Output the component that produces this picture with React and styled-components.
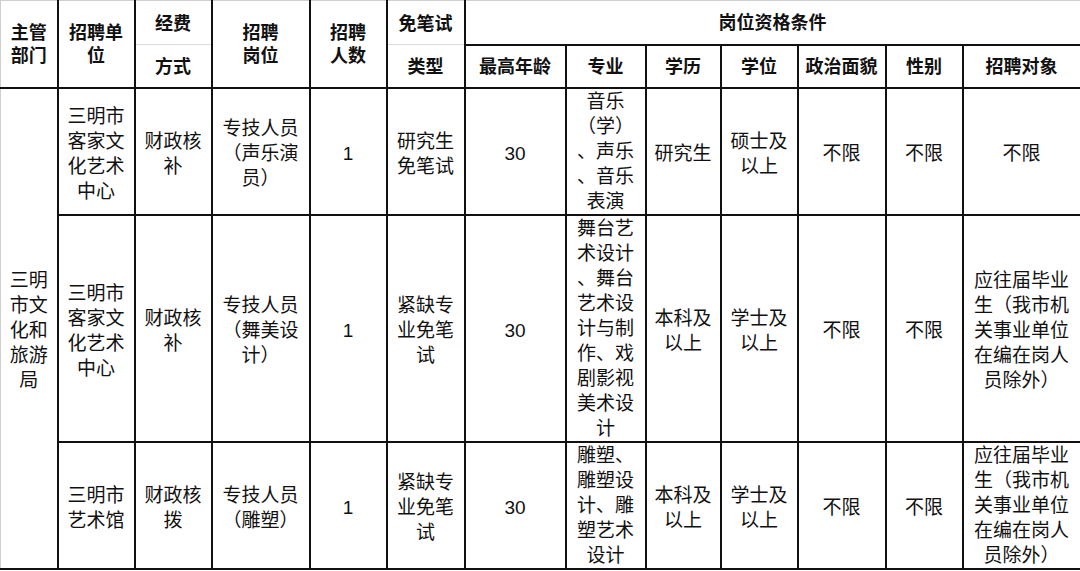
import React from "react";
import styled, { createGlobalStyle } from "styled-components";

const GlobalStyle = createGlobalStyle`
	html, body {
		margin: 0;
		padding: 0;
		background: #ffffff;
	}
	body {
		font-family: "Liberation Sans", "Noto Sans CJK SC", sans-serif;
		color: #111111;
	}
`;

const Page = styled.div`
	width: 1080px;
	height: 571px;
	overflow: hidden;
	background: #ffffff;
`;

const Table = styled.table`
	width: 1080px;
	table-layout: fixed;
	border-collapse: collapse;
	border-top: 1px solid #cfcfcf;
`;

const HeadRow = styled.tr`
	height: ${(p) => p.$h}px;
`;

const HeadCell = styled.th`
	padding: 3px 0 0;
	font-size: 18px;
	font-weight: bold;
	line-height: 23px;
	text-align: center;
	vertical-align: middle;
	color: #111111;
	white-space: nowrap;
	border: 2px solid #111111;
	border-top: 1px solid #cfcfcf;
	${(p) => p.$first && "border-left: 1px solid #cfcfcf;"}
	${(p) => p.$upper && "border-bottom: 1px solid #dcdcdc;"}
	${(p) => p.$lower && "border-top: 1px solid #dcdcdc;"}
	${(p) => p.$sub && "border-top: 2px solid #111111;"}
`;

const Cell = styled.td`
	padding: ${(p) => (p.$tall ? "0" : "5px 0 0")};
	font-size: 19px;
	line-height: 25px;
	text-align: center;
	vertical-align: middle;
	color: #111111;
	white-space: nowrap;
	border: 2px solid #111111;
	${(p) => p.$first && "border-left: 1px solid #cfcfcf;"}
`;

const Lines = ({ text }) => {
	const parts = text.split("/");
	return parts.map((line, i) => (
		<React.Fragment key={i}>
			{line}
			{i < parts.length - 1 && <br />}
		</React.Fragment>
	));
};

const widths = [57, 77, 77, 98, 77, 78, 101, 80, 75, 77, 88, 77, 118];

const rows = [
	[
		"三明市/客家文/化艺术/中心",
		"财政核/补",
		"专技人员/（声乐演/员）",
		"1",
		"研究生/免笔试",
		"30",
		"音乐/（学）/、声乐/、音乐/表演",
		"研究生",
		"硕士及/以上",
		"不限",
		"不限",
		"不限",
	],
	[
		"三明市/客家文/化艺术/中心",
		"财政核/补",
		"专技人员/（舞美设/计）",
		"1",
		"紧缺专/业免笔/试",
		"30",
		"舞台艺/术设计/、舞台/艺术设/计与制/作、戏/剧影视/美术设/计",
		"本科及/以上",
		"学士及/以上",
		"不限",
		"不限",
		"应往届毕业/生（我市机/关事业单位/在编在岗人/员除外）",
	],
	[
		"三明市/艺术馆",
		"财政核/拨",
		"专技人员/（雕塑）",
		"1",
		"紧缺专/业免笔/试",
		"30",
		"雕塑、/雕塑设/计、雕/塑艺术/设计",
		"本科及/以上",
		"学士及/以上",
		"不限",
		"不限",
		"应往届毕业/生（我市机/关事业单位/在编在岗人/员除外）",
	],
];

const subHeads = ["最高年龄", "专业", "学历", "学位", "政治面貌", "性别", "招聘对象"];

const lineCount = (t) => t.split("/").length;

export default function App() {
	return (
		<Page>
			<GlobalStyle />
			<Table>
				<colgroup>
					{widths.map((w, i) => (
						<col key={i} style={{ width: w }} />
					))}
				</colgroup>
				<thead>
					<HeadRow $h={44}>
						<HeadCell rowSpan={2} $first>
							<Lines text="主管/部门" />
						</HeadCell>
						<HeadCell rowSpan={2}>
							<Lines text="招聘单/位" />
						</HeadCell>
						<HeadCell $upper>经费</HeadCell>
						<HeadCell rowSpan={2}>
							<Lines text="招聘/岗位" />
						</HeadCell>
						<HeadCell rowSpan={2}>
							<Lines text="招聘/人数" />
						</HeadCell>
						<HeadCell $upper>免笔试</HeadCell>
						<HeadCell colSpan={7}>岗位资格条件</HeadCell>
					</HeadRow>
					<HeadRow $h={43}>
						<HeadCell $lower>方式</HeadCell>
						<HeadCell $lower>类型</HeadCell>
						{subHeads.map((h) => (
							<HeadCell key={h} $sub>
								{h}
							</HeadCell>
						))}
					</HeadRow>
				</thead>
				<tbody>
					{rows.map((row, r) => {
						const most = Math.max(...row.map(lineCount));
						return (
							<tr key={r}>
								{r === 0 && (
									<Cell rowSpan={3} $first>
										<Lines text="三明/市文/化和/旅游/局" />
									</Cell>
								)}
								{row.map((text, c) => (
									<Cell key={c} $tall={lineCount(text) === most}>
										<Lines text={text} />
									</Cell>
								))}
							</tr>
						);
					})}
				</tbody>
			</Table>
		</Page>
	);
}
